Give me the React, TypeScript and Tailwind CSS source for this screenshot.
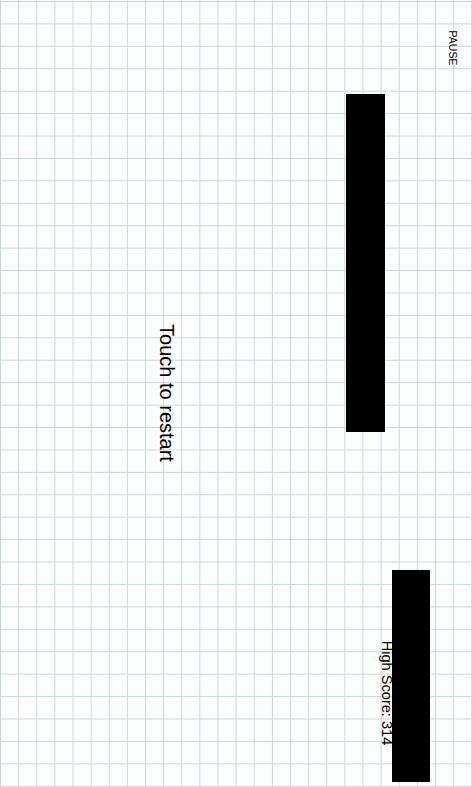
export default function App() {
  return (
    <div className="relative w-[472px] h-[787px] overflow-hidden bg-[#fcfefe] bg-[linear-gradient(to_right,#ccd5d5_1.4px,transparent_1.4px),linear-gradient(to_bottom,#ccd5d5_1.4px,transparent_1.4px)] bg-[size:18.13px_22.43px] bg-[position:0px_1px] font-['Liberation_Sans',Arial,sans-serif] text-black">
      {/* obstacles */}
      <div className="absolute left-[346px] top-[94px] w-[39px] h-[338px] bg-black" />
      <div className="absolute left-[392px] top-[570px] w-[38px] h-[212px] bg-black" />

      <div className="absolute left-[453px] top-[47.5px] -translate-x-1/2 -translate-y-1/2 rotate-90 whitespace-nowrap text-[10.5px] leading-none">
        PAUSE
      </div>

      <div className="absolute left-[166.5px] top-[392.5px] -translate-x-1/2 -translate-y-1/2 rotate-90 whitespace-nowrap text-[20px] leading-none">
        Touch to restart
      </div>

      <div className="absolute left-[387px] top-[692.5px] -translate-x-1/2 -translate-y-1/2 rotate-90 whitespace-nowrap text-[14.6px] leading-none">
        High Score: 314
      </div>
    </div>
  )
}
